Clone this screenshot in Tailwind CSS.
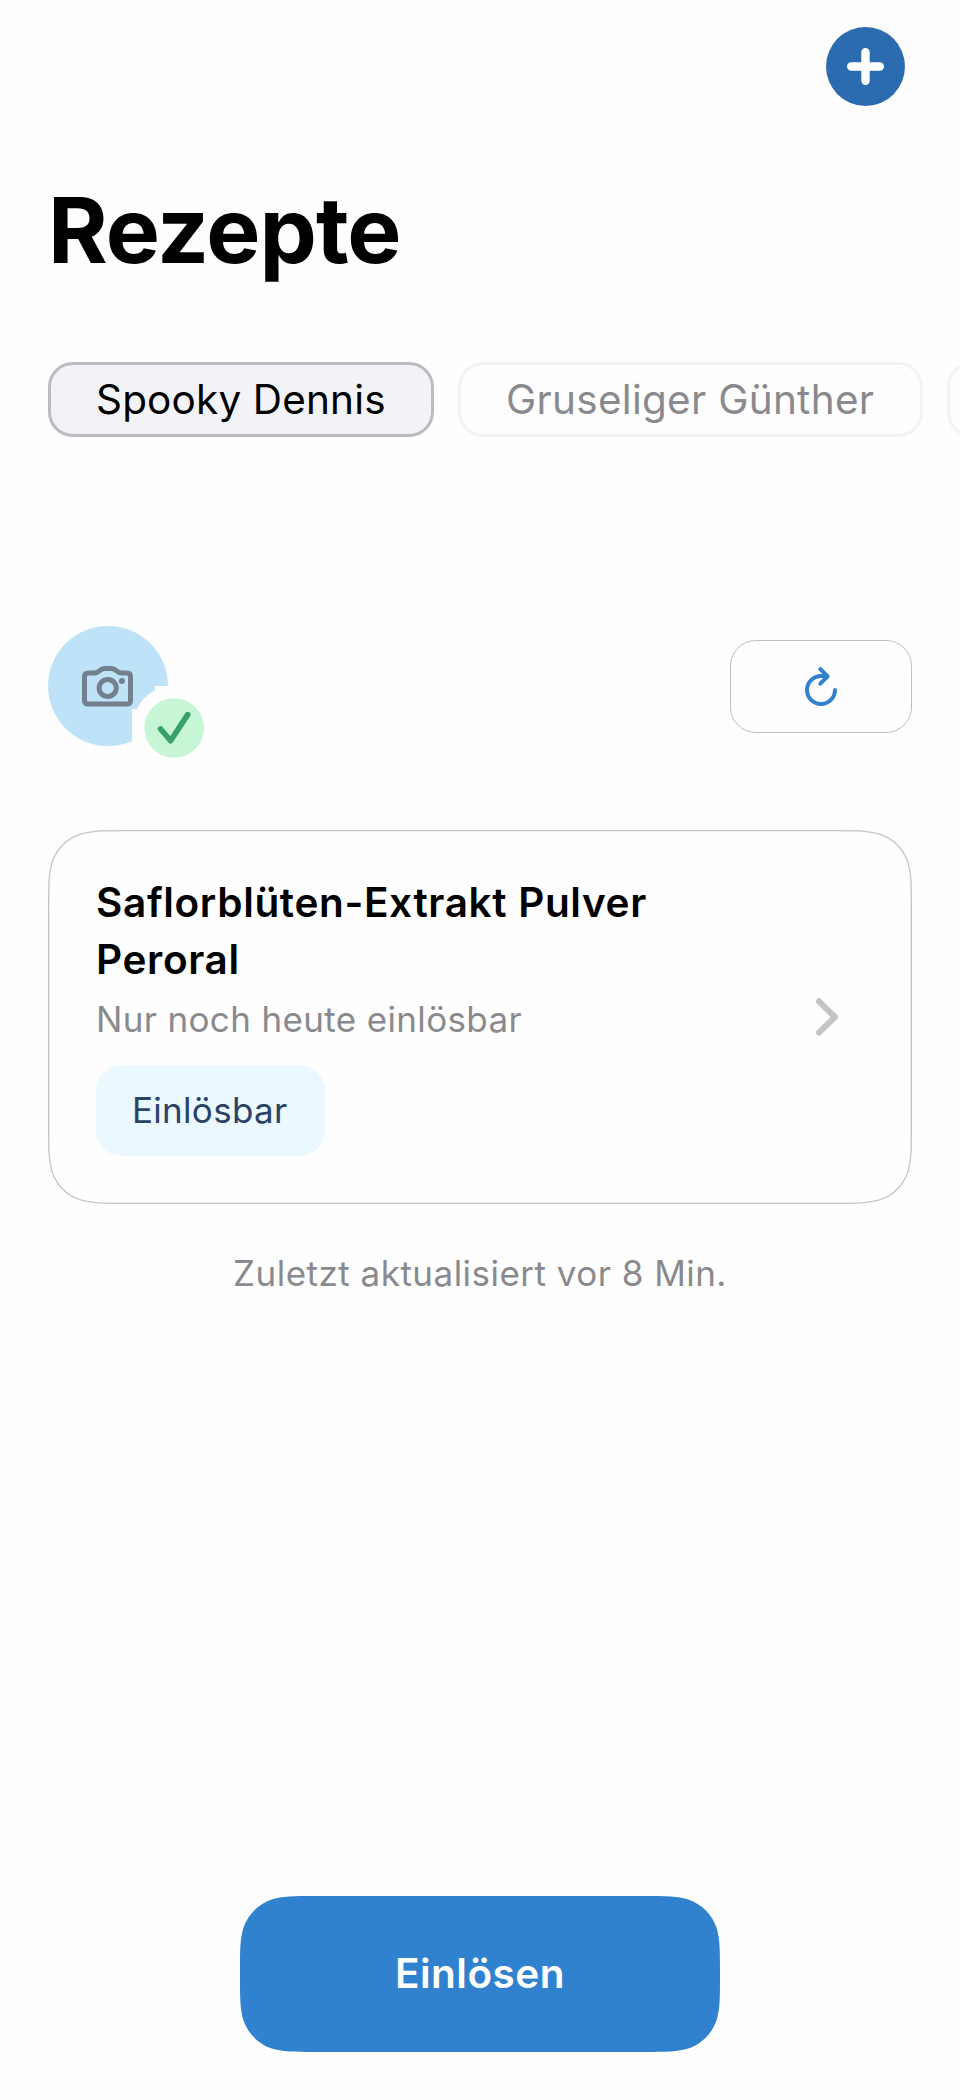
<!DOCTYPE html>
<html lang="de">
<head>
<meta charset="utf-8">
<title>Rezepte</title>
<script src="https://cdn.jsdelivr.net/npm/@tailwindcss/browser@4"></script>
</head>
<body class="bg-[#fefefe] font-['Inter','Liberation_Sans',sans-serif] text-black">
<div class="flex h-[2100px] w-[960px] flex-col overflow-hidden">
  <header class="flex justify-end pt-[27px] pr-[55px]">
    <button class="size-[79px]" aria-label="Rezept hinzufügen">
      <svg class="block size-full" viewBox="0 0 79 79"><circle cx="39.5" cy="39.5" r="39.5" fill="#2b6cb0"/><path d="M39.5 25.2V53.8M25.2 39.5H53.8" stroke="#fff" stroke-width="8.4" stroke-linecap="round"/></svg>
    </button>
  </header>
  <h1 class="mt-[69px] ml-[48px] h-[110px] text-[91px] leading-[110px] font-bold tracking-[-1px] whitespace-nowrap">Rezepte</h1>

  <nav class="mt-[77px] ml-[48px] flex h-[75px] gap-6 text-[40.5px] leading-[69px] whitespace-nowrap">
    <div class="w-[386px] shrink-0 rounded-[25px] border-3 border-[#bcbcc0] bg-[#f2f2f7] pl-[45px] tracking-[0.16px]">Spooky Dennis</div>
    <div class="w-[465px] shrink-0 rounded-[25px] border-3 border-[#f2f2f7] pl-[45px] tracking-[0.28px] text-[#8a8a8e]">Gruseliger Günther</div>
    <div class="w-[300px] shrink-0 rounded-[25px] border-3 border-[#f2f2f7]"></div>
  </nav>

  <section class="mt-[189px] ml-[48px] flex h-[144px] w-[864px] justify-between">
    <svg class="block h-[144px] w-[168px]" viewBox="48 626 168 144" fill="none" stroke-linecap="round" stroke-linejoin="round">
      <circle cx="108" cy="686" r="60" fill="#bee3f8"/>
      <g stroke="#73808e" stroke-width="5">
        <path d="M88.500 673H94.500C97 673 98 672.300 99.500 670.800C101.300 669 102.500 668.500 104.500 668.500H111.500C113.500 668.500 114.700 669 116.500 670.800C118 672.300 119 673 121.500 673H127Q130.500 673 130.500 676.500V700.500Q130.500 704 127 704H88Q84.500 704 84.500 700.500V676.500Q84.500 673 88.500 673Z"/>
        <circle cx="107.700" cy="688" r="8.600"/>
      </g>
      <circle cx="121.900" cy="681" r="3" fill="#73808e"/>
      <path d="M155 686H216V770H174L132 742V709H137Q143 696 155 690.500Z" fill="#fefefe"/>
      <circle cx="174.200" cy="728" r="29.800" fill="#c6f6d5"/>
      <path d="M160.600 729L170.600 740.700L187.700 714.600" stroke="#38a169" stroke-width="5.600"/>
    </svg>
    <button class="mt-[14px] flex h-[93px] w-[182px] items-center justify-center rounded-[26px] border border-[#bebec0]" aria-label="Aktualisieren">
      <svg class="block h-[42px] w-[36px]" viewBox="803 666 36 42" fill="none" stroke="#3182ce" stroke-width="4" stroke-linecap="round" stroke-linejoin="round"><path d="M835 690A14 14 0 1 1 821 676H827.500M820.300 669L827.600 676.300L820.300 683.700"/></svg>
    </button>
  </section>

  <article data-squircle="49" data-line="1.300" class="relative mt-[60px] ml-[48px] flex h-[374px] w-[864px] items-center justify-between fill-transparent stroke-[#c4c4c6] pr-[72px] pl-[48px]">
    <div class="relative flex h-[278px] flex-col items-start">
      <h2 class="-mt-[4px] text-[40.5px] leading-[57px] font-semibold tracking-[0.65px] whitespace-nowrap">Saflorblüten-Extrakt Pulver<br>Peroral</h2>
      <p class="mt-[5px] text-[35px] leading-[52px] tracking-[0.35px] whitespace-nowrap text-[#8a8a8e]">Nur noch heute einlösbar</p>
      <div class="mt-[20px] h-[91px] w-[229px] rounded-[26px] bg-[#ebf8ff] pl-[36px] text-[35px] leading-[91px] tracking-[0.3px] text-[#2a4365]">Einlösbar</div>
    </div>
    <svg class="relative block h-[40px] w-[24px]" viewBox="816 997.500 24 40" fill="none" stroke="#c4c4c6" stroke-width="6" stroke-linecap="round" stroke-linejoin="round"><path d="M819 1001.800L834.800 1017.500L819 1033.200"/></svg>
  </article>

  <p class="mt-[43px] text-center text-[35px] leading-[52px] tracking-[0.48px] whitespace-nowrap text-[#8a8a8e]">Zuletzt aktualisiert vor 8 Min.</p>

  <button data-squircle="49" data-line="0" class="relative mt-auto mb-[48px] h-[156px] w-[480px] self-center fill-[#3182ce] text-[40.5px] leading-[156px] font-semibold tracking-[0.5px] text-white"><span class="relative">Einlösen</span></button>
</div>
<script>
// Draws a continuous-curvature rounded rectangle behind every [data-squircle] element.
const NS = 'http://www.w3.org/2000/svg';
const rotations = [(x, y) => [x, y], (x, y) => [-y, x], (x, y) => [-x, -y], (x, y) => [y, -x]];
const corner = [[0.44017, 0, 0.66025, 0, 0.89717, 0.07491], [0.25867, 0.09415, 0.46243, 0.29791, 0.55658, 0.55658], [0.07491, 0.23692, 0.07491, 0.457, 0.07491, 0.89717]];
function draw(el) {
  const line = +el.dataset.line, w = el.offsetWidth - line, h = el.offsetHeight - line;
  if (w <= 0 || h <= 0) return;
  const r = Math.min(+el.dataset.squircle, h / 2 / 1.52866), e = 1.52866 * r;
  let d = `M${line / 2 + e} ${line / 2}`;
  rotations.forEach((turn, i) => {
    d += `l${turn((i % 2 ? h : w) - 2 * e, 0)}`;
    for (const c of corner) d += 'c' + [0, 2, 4].map(k => turn(c[k] * r, c[k + 1] * r)).join(' ');
  });
  el.querySelector('path').setAttribute('d', d + 'Z');
}
const observer = new ResizeObserver(entries => entries.forEach(entry => draw(entry.target)));
for (const el of document.querySelectorAll('[data-squircle]')) {
  const svg = document.createElementNS(NS, 'svg');
  svg.setAttribute('class', 'absolute inset-0 size-full');
  const path = document.createElementNS(NS, 'path');
  if (+el.dataset.line) path.setAttribute('stroke-width', el.dataset.line);
  else path.setAttribute('stroke', 'none');
  svg.append(path);
  el.prepend(svg);
  draw(el);
  observer.observe(el);
}
addEventListener('load', () => document.querySelectorAll('[data-squircle]').forEach(draw));
</script>
</body>
</html>
